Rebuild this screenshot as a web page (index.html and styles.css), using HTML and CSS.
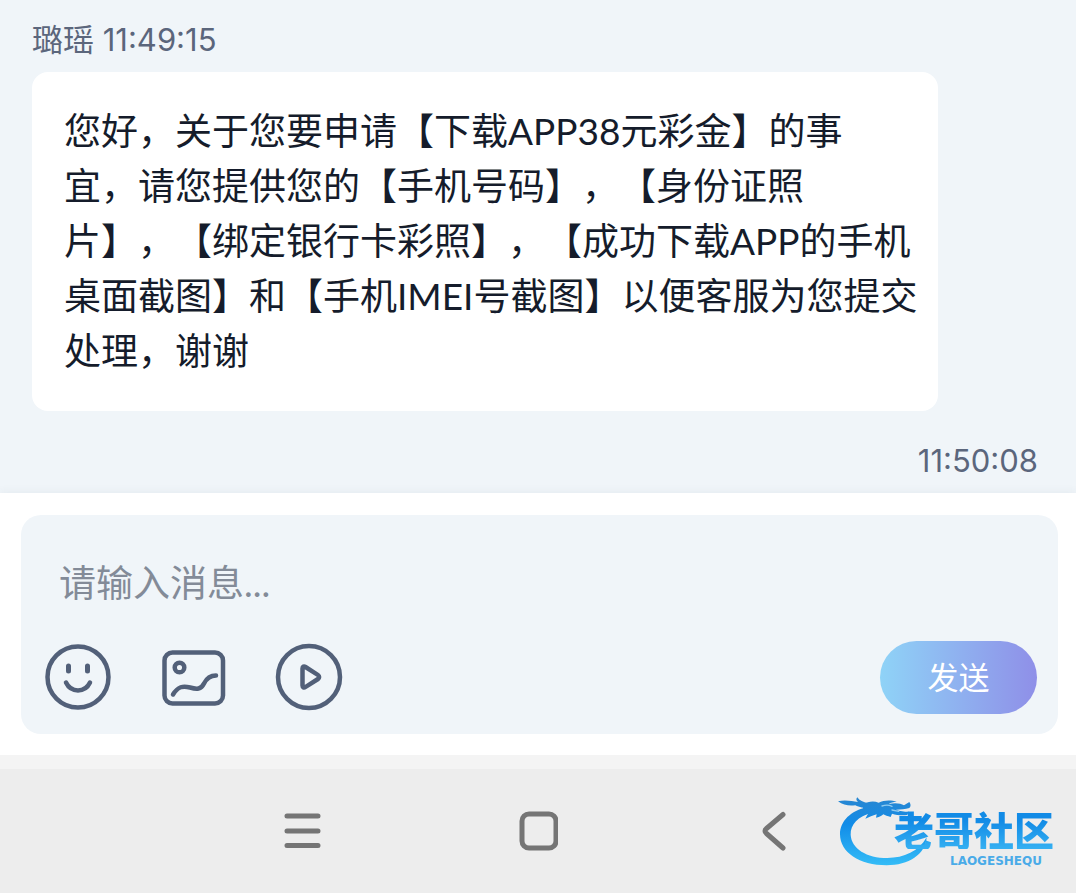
FILE: index.html
```html
<!DOCTYPE html>
<html lang="zh-CN">
<head>
  <meta charset="UTF-8" />
  <meta name="viewport" content="width=device-width, initial-scale=1.0" />
  <title>在线客服</title>
  <link rel="stylesheet" href="styles.css">
</head>
<body>
  <main class="chat">
    <div class="meta">璐瑶 <time>11:49:15</time></div>
    <div class="bubble">
      您好，关于您要申请【下载APP38元彩金】的事<br>
      宜，请您提供您的【手机号码】，【身份证照<br>
      片】，【绑定银行卡彩照】，【成功下载APP的手机<br>
      桌面截图】和【手机IMEI号截图】以便客服为您提交<br>
      处理，谢谢
    </div>
    <div class="meta meta-own"><time>11:50:08</time></div>
  </main>

  <form class="composer">
    <div class="composer-box">
      <textarea class="message-input" rows="1" placeholder="请输入消息..." aria-label="请输入消息"></textarea>
      <div class="actions">
        <button type="button" class="icon-btn" aria-label="表情">
          <svg viewBox="0 0 66 66">
            <circle cx="33" cy="32" r="30.5" />
            <path d="M23.500 21v5M42.500 21v5" stroke-width="5" />
            <path d="M21 37.500c5 10.500 19 10.500 24 0" />
          </svg>
        </button>
        <button type="button" class="icon-btn" aria-label="图片">
          <svg viewBox="0 0 66 66">
            <rect x="3.500" y="7.500" width="58.500" height="51" rx="8" />
            <circle cx="18.500" cy="22.500" r="4.800" />
            <path d="M12 49.500c5-8 10-9 17-7 7 2 11 2 14-4 3-6 7-8 12-8" />
          </svg>
        </button>
        <button type="button" class="icon-btn" aria-label="视频">
          <svg viewBox="0 0 66 66">
            <circle cx="32" cy="32" r="31" />
            <path d="M25.500 23.500v17c0 2 1.500 2.500 3 1.500l12.500-8c1.500-1 1.500-3 0-4l-12.500-8c-1.500-1-3-.5-3 1.500z" />
          </svg>
        </button>
        <button type="submit" class="send-btn">发送</button>
      </div>
    </div>
  </form>

  <nav class="system-nav">
    <button type="button" class="nav-btn" aria-label="菜单">
      <svg viewBox="0 0 40 40"><path d="M5 5h31M5 20h31M5 34.500h31" /></svg>
    </button>
    <button type="button" class="nav-btn" aria-label="主页">
      <svg viewBox="0 0 40 40"><rect x="4" y="3" width="34" height="34" rx="7" /></svg>
    </button>
    <button type="button" class="nav-btn" aria-label="返回">
      <svg viewBox="0 0 40 40"><path d="M29 3.500L12.500 17.500q-3 2.500 0 5L29 37" /></svg>
    </button>
    <div class="brand">
      <svg class="brand-dragon" viewBox="54 50 270 210">
        <defs>
          <linearGradient id="dragon" x1="0" y1="50" x2="0" y2="260" gradientUnits="userSpaceOnUse">
            <stop offset="0" stop-color="#2b86cf" />
            <stop offset=".4" stop-color="#118ce8" />
            <stop offset="1" stop-color="#35bdf7" />
          </linearGradient>
        </defs>
        <g fill="url(#dragon)">
          <!-- body -->
          <path d="M142 84C92 94 60 126 60 165c0 54 58 93 140 93 66 0 116-32 120-84-24 42-68 62-118 62-62 0-108-28-110-70-1-30 22-56 64-66z" />
          <!-- whiskers -->
          <path d="M54 66c22-6 42 0 60 2-6-5-6-10-2-14 6 10 18 14 32 18l10 16c-24-2-36-4-48-10-20 2-36 0-52-12z" />
          <!-- head -->
          <path d="M130 74c14-8 32-10 46-4 16-8 40-8 54-2-10 0-18 2-24 6 20-4 36-2 46 4l16-10c4 6 6 12 0 18-12 4-26 5-40 5 12 4 24 6 38 6l-4 10c-18 2-32 0-46-4l-4 10c-10-2-16-5-22-8-6 6-14 9-22 10l2-10c-12 4-22 8-34 13l8-15-22 6 6-15z" />
        </g>
        <path d="M186 80c12-4 22-3 30 1M216 92l20 4" fill="none" stroke="#8fcbf0" stroke-width="4" />
      </svg>
      <div class="brand-name">老哥社区</div>
      <div class="brand-latin">LAOGESHEQU</div>
    </div>
  </nav>
</body>
</html>
```
FILE: styles.css
```css
:root {
  --bg: #f0f5f9;
  --fg: #151c2b;
  --muted: #5b667c;
  --icon: #526079;
  --nav: #ededed;
}
* { box-sizing: border-box; }
body {
  margin: 0;
  min-height: 100vh;
  display: flex;
  flex-direction: column;
  background: var(--bg);
  color: var(--fg);
  font-family: Lato, "Noto Sans CJK SC", sans-serif;
}
button {
  padding: 0;
  border: none;
  background: none;
  cursor: pointer;
}
svg { display: block; fill: none; stroke-linecap: round; stroke-linejoin: round; }

.chat { padding: 20px 38px 12px 32px; }
.meta {
  font-family: Inter, "Noto Sans CJK SC", sans-serif;
  font-size: 31px;
  line-height: 40px;
  color: var(--muted);
}
.meta-own { margin-top: 30px; text-align: right; }
.bubble {
  margin: 12px 100px 0 0;
  padding: 31px 16px 33px 32px;
  background: #fff;
  border-radius: 16px;
  font-size: 37px;
  line-height: 55px;
  text-spacing-trim: space-all;
}

.composer {
  padding: 22px 18px 21px 21px;
  background: #fff;
  box-shadow: 0 -2px 8px rgba(60, 70, 90, 0.05);
}
.composer-box {
  padding: 40px 21px 20px 24px;
  background: var(--bg);
  border-radius: 20px;
}
.message-input {
  display: block;
  width: 100%;
  height: 55px;
  padding: 0 14px;
  border: none;
  outline: none;
  resize: none;
  overflow: hidden;
  background: none;
  color: var(--fg);
  font-family: inherit;
  font-size: 37px;
  line-height: 55px;
}
.message-input::placeholder { color: #838b98; opacity: 1; }
.actions {
  display: flex;
  align-items: center;
  gap: 50px;
  margin-top: 31px;
}
.icon-btn { width: 66px; height: 66px; }
.icon-btn svg { stroke: var(--icon); stroke-width: 4.5; overflow: visible; }
.send-btn {
  width: 157px;
  height: 73px;
  margin-left: auto;
  padding-bottom: 4px;
  border-radius: 37px;
  background: linear-gradient(90deg, #8fd3f7, #8f8fe8);
  color: #fff;
  font-family: inherit;
  font-size: 31px;
}

.system-nav {
  position: relative;
  flex: 1;
  min-height: 138px;
  display: flex;
  align-items: center;
  justify-content: center;
  gap: 196px;
  border-top: 14px solid #f4f4f4;
  background: var(--nav);
}
.nav-btn { width: 40px; height: 40px; }
.nav-btn svg { stroke: #757575; stroke-width: 5; }

/* brand mark floats over the right end of the bar */
.brand {
  position: absolute;
  top: 27px;
  right: 16px;
  width: 222px;
  height: 72px;
}
.brand-dragon { position: absolute; left: 0; top: 0; width: 90px; height: 70px; }
.brand-name {
  position: absolute;
  right: 6px;
  top: 13px;
  font-family: "Noto Sans CJK SC", sans-serif;
  font-size: 40px;
  font-weight: 900;
  line-height: 40px;
  white-space: nowrap;
  background: linear-gradient(#128be6 30%, #35b0f2);
  -webkit-background-clip: text;
  background-clip: text;
  color: transparent;
}
.brand-latin {
  position: absolute;
  right: 18px;
  top: 59px;
  font-family: "DejaVu Sans", sans-serif;
  font-size: 12px;
  font-weight: bold;
  line-height: 12px;
  color: #4aabe8;
}
```
